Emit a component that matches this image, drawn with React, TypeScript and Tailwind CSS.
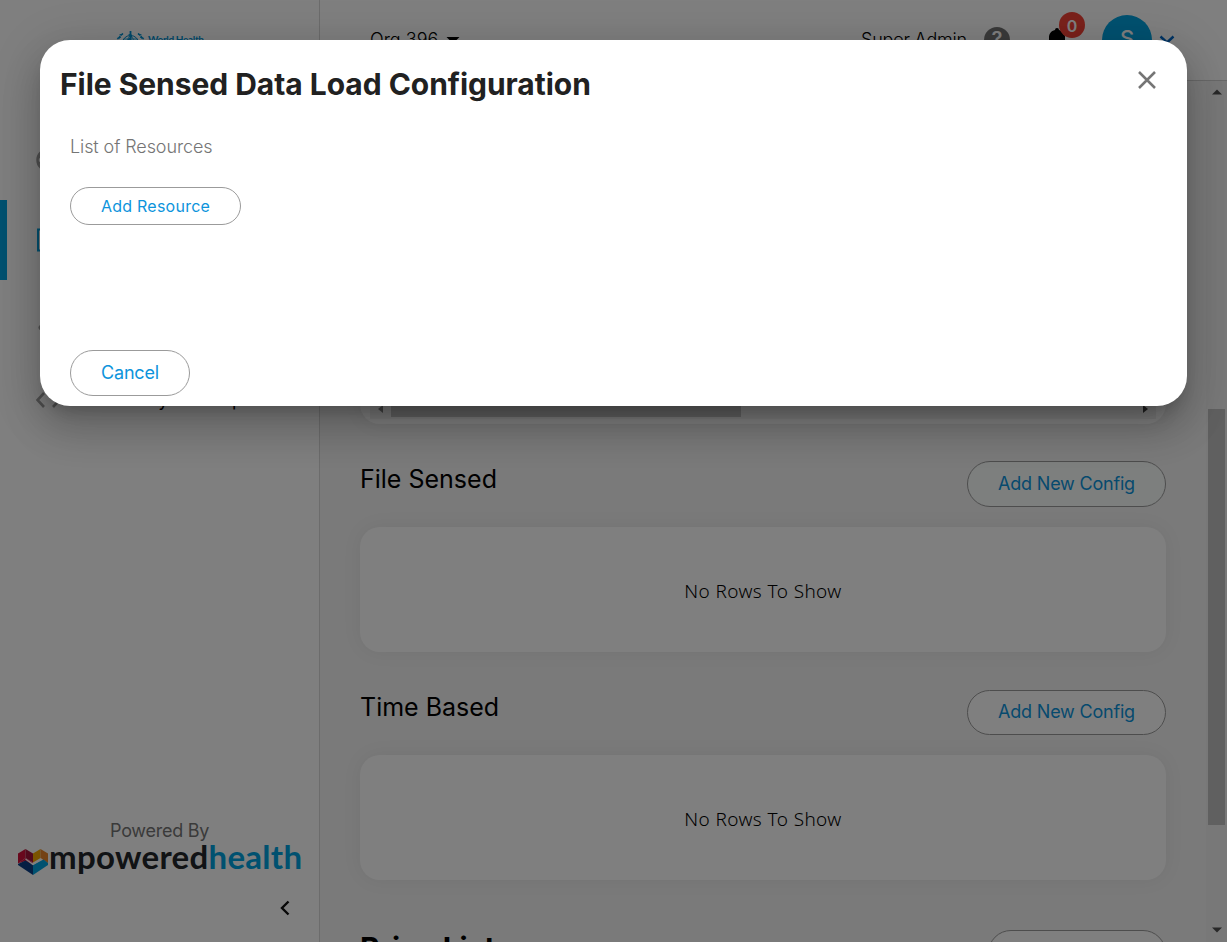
import React from "react";

const INTER = "font-['Inter','Liberation_Sans',sans-serif]";

function PillButton({ children, className = "" }: { children: React.ReactNode; className?: string }) {
  return (
    <button
      className={`flex shrink-0 items-center justify-center rounded-full border border-[#9b9b9b] text-[18px] leading-none text-[#0d94dc] ${className}`}
    >
      {children}
    </button>
  );
}

function WhoLogo() {
  return (
    <div className="flex items-start pl-[116px] pt-[31px] text-[#0093d5]">
      <svg width="29" height="28" viewBox="0 0 29 28" fill="none" stroke="currentColor">
        <path d="M14.5 0v27" strokeWidth="1.8" />
        <path d="M12.5 4c3-1 4 1 2 3s-4 3-1 5" strokeWidth="1.3" />
        <circle cx="14.5" cy="13" r="8.5" strokeWidth="1" />
        <path d="M6 13h17M14.5 4.5c-5 4-5 13 0 17M14.5 4.5c5 4 5 13 0 17M8 8h13" strokeWidth=".8" />
        <path d="M7 2.500C2 6 0 12 3 19M22 2.500c5 3.500 7 9.500 4 16.500" strokeWidth="1.500" strokeDasharray="3 1" />
        <path d="M7 3 3.500 4M5 6 1 7.500M22 3l3.500 1M24 6l4 1.500" strokeWidth="1.200" />
      </svg>
      <div className="pl-[3px] pt-[2px] font-['Lato',sans-serif] text-[10px] font-bold leading-[12px] tracking-[-0.35px]">
        World Health
        <br />
        Organization
      </div>
    </div>
  );
}

function HeartLogo() {
  return (
    <svg width="30" height="26" viewBox="0 0 30 26">
      <path d="M0 4.500 7.500 0v9L0 14.500z" fill="#d0103a" />
      <path d="M7.500 0 15 4.500v9L7.500 9z" fill="#a3143a" />
      <path d="M0 14.500 7.500 9 15 13.500 11 16 7.500 12 0 14.500z" fill="#d50f3c" />
      <path d="M15 4.500 22.500 0v9L15 13.500z" fill="#f5a800" />
      <path d="M22.500 0 30 4.500v9.500L22.500 9z" fill="#e8842a" />
      <path d="M0 15 7.500 11.500 15 16V26L0 16z" fill="#0b3f86" />
      <path d="M15 16 25.500 10.500 30 14v2L15 26z" fill="#00a3e0" />
      <path d="m7.500 10 7.500 5.300 8.500-5.300" fill="none" stroke="#fff" strokeWidth="1.400" />
    </svg>
  );
}

function Sidebar() {
  return (
    <aside className="flex h-full w-[320px] shrink-0 flex-col border-r border-[#d8d8d8] bg-white">
      <div className="h-[120px]">
        <WhoLogo />
      </div>
      <nav className="flex flex-col text-[18px] text-black">
        <div className="flex h-20 items-center gap-5 pl-9 text-[#a0a0a0]">
          <svg width="24" height="24" viewBox="0 0 24 24" fill="none" stroke="currentColor" strokeWidth="2.500">
            <circle cx="12" cy="12" r="10.500" />
            <path d="M2 9h20M2 15h20" />
          </svg>
        </div>
        <div className="flex h-20 items-center border-l-[7px] border-[#00a3e0] pl-[30px] text-[#00a3e0]">
          <svg width="24" height="24" viewBox="0 0 24 24" fill="none" stroke="currentColor" strokeWidth="2">
            <rect x="1" y="1.500" width="22" height="21" />
          </svg>
        </div>
        <div className="flex h-20 items-center pl-[38px] text-[#a0a0a0]">
          <svg width="24" height="24" viewBox="0 0 24 24" fill="currentColor">
            <circle cx="3" cy="19.500" r="2.500" />
          </svg>
        </div>
        <div className="flex h-20 items-center gap-7 pl-9">
          <svg width="26" height="16" viewBox="0 0 26 16" fill="none" stroke="#a0a0a0" strokeWidth="2.600">
            <path d="M8 1 1.500 8 8 15M17 1l6.500 7-6.500 7" />
          </svg>
          <span className="-mt-[2px] whitespace-nowrap">Directory Developer</span>
        </div>
      </nav>
      <div className="mt-auto flex h-[126px] flex-col">
        <div className="pl-[110px] pt-[4px] text-[18px] leading-[22px] tracking-[-0.25px] text-[#757575]">Powered By</div>
        <div className="flex h-9 items-start pl-[18px]">
          <div className="pt-[7px]">
            <HeartLogo />
          </div>
          <div className="-mt-[1px] whitespace-nowrap pl-[1px] font-['Lato',sans-serif] text-[33px] font-bold leading-[30px] tracking-[0.3px] text-[#22262b]">
            mpowered<span className="text-[#00a3e0]">health</span>
          </div>
        </div>
        <div className="pl-[279px] pt-[22px]">
          <svg width="12" height="16" viewBox="0 0 12 16" fill="none" stroke="#111" strokeWidth="2.400">
            <path d="M9.500 1.500 3 8l6.500 6.500" />
          </svg>
        </div>
      </div>
    </aside>
  );
}

function Header() {
  return (
    <header className="flex h-[81px] shrink-0 items-start border-b border-[#d0d0d0] bg-white text-[18px] text-black">
      <div className="flex items-center pl-[50px] pt-[29px] font-light leading-[22px]">
        Org 396
        <svg className="ml-[8px]" width="14" height="8" viewBox="0 0 14 8">
          <path d="M.5 1h13L7 7.500z" fill="#000" />
        </svg>
      </div>
      <div className="ml-auto flex items-start">
        <span className="pt-[29px] font-light leading-[22px] tracking-[-0.2px]">Super Admin</span>
        <div className="ml-[17px] mt-[27px] flex h-[26px] w-[26px] items-center justify-center rounded-full bg-[#757575] pb-[2px] text-[20px] font-semibold leading-none text-white">
          ?
        </div>
        <div className="relative ml-[37px] mt-[28px]">
          <svg width="20" height="24" viewBox="0 0 20 24">
            <path d="M10 0a2 2 0 0 0-2 2C4 3 2 6 2 9v8l-2 3h20l-2-3V9c0-3-2-6-6-7a2 2 0 0 0-2-2z" fill="#000" />
          </svg>
          <div className="absolute -top-[16px] left-[12px] flex h-[26px] w-[26px] items-center justify-center rounded-full bg-[#f44336] pt-[1px] text-[16px] font-semibold text-white">
            0
          </div>
        </div>
        <div className="ml-[35px] mt-[15px] flex h-[50px] w-[50px] items-center justify-center rounded-full bg-[#00a3e0] pb-[3px] text-[22px] font-medium text-white">
          S
        </div>
        <svg className="ml-[7px] mr-[52px] mt-[35px]" width="16" height="10" viewBox="0 0 16 10">
          <path d="m1.500 1.500 6.500 6 6.500-6" fill="none" stroke="#0069c8" strokeWidth="2.400" />
        </svg>
      </div>
    </header>
  );
}

function EmptyGrid() {
  return (
    <div className="mt-5 flex h-[125px] shrink-0 items-center justify-center rounded-[20px] bg-white pt-[4px] font-['Noto_Sans','Open_Sans',sans-serif] text-[19px] font-light tracking-[0.4px] text-black shadow-[0_0_20px_rgba(0,0,0,0.06)]">
      No Rows To Show
    </div>
  );
}

function Content() {
  return (
    <main className="flex min-w-0 flex-1 flex-col overflow-hidden bg-[#f4f4f4] pl-10 pr-10">
      <div className="flex h-[343px] shrink-0 flex-col justify-end rounded-[20px] bg-white px-[10px] pb-[5px] shadow-[0_0_20px_rgba(0,0,0,0.06)]">
        <div className="flex h-[17px] items-center bg-[#f1f1f1]">
          <svg className="-mt-[4px] mx-[7px]" width="7" height="8" viewBox="0 0 7 8">
            <path d="M6 0v8L1 4z" fill="#808080" />
          </svg>
          <div className="-mt-px h-[13px] w-[350px] bg-[#c1c1c1]" />
          <svg className="-mt-[4px] ml-auto mr-[7px]" width="7" height="8" viewBox="0 0 7 8">
            <path d="M1 0v8l5-4z" fill="#404040" />
          </svg>
        </div>
      </div>

      <div className="mt-[37px] flex h-[46px] shrink-0 items-start justify-between">
        <h2 className="pt-[2px] text-[25px] leading-[32px] text-black">File Sensed</h2>
        <PillButton className="h-[46px] w-[199px] bg-[#fafefd] tracking-[-0.2px]">Add New Config</PillButton>
      </div>
      <EmptyGrid />

      <div className="mt-[38px] flex h-[45px] shrink-0 items-start justify-between">
        <h2 className="pt-[1px] text-[25px] leading-[32px] text-black">Time Based</h2>
        <PillButton className="h-[45px] w-[199px] bg-white pb-[1px] tracking-[-0.2px]">Add New Config</PillButton>
      </div>
      <EmptyGrid />

      <div className="mt-[50px] flex h-[46px] shrink-0 items-start justify-between">
        <h2 className="text-[30px] font-bold leading-[36px] text-black">Price List</h2>
        <PillButton className="h-[46px] w-[178px] bg-white">Add Price List</PillButton>
      </div>
    </main>
  );
}

function Scrollbar() {
  return (
    <div className="flex w-[21px] shrink-0 flex-col items-center bg-[#f1f1f1]">
      <svg className="mt-[8px]" width="10" height="6" viewBox="0 0 10 6">
        <path d="M0 5.500h10L5 .5z" fill="#505050" />
      </svg>
      <div className="mt-[314px] h-[416px] w-[17px] bg-[#c1c1c1]" />
      <svg className="mt-auto mb-[9px]" width="10" height="6" viewBox="0 0 10 6">
        <path d="M0 .5h10L5 5.500z" fill="#505050" />
      </svg>
    </div>
  );
}

function ConfigDialog() {
  return (
    <div
      role="dialog"
      className="flex h-[366px] flex-col rounded-[30px] bg-white shadow-[0_11px_15px_-7px_rgba(0,0,0,0.2),0_24px_38px_3px_rgba(0,0,0,0.14),0_9px_46px_8px_rgba(0,0,0,0.12)]"
    >
      <div className="flex items-start justify-between pl-5 pr-[31px] pt-[26px]">
        <h1 className="text-[30px] font-bold leading-[36px] tracking-[-0.04px] text-[#212121]">
          File Sensed Data Load Configuration
        </h1>
        <svg className="mt-[5px]" width="18" height="18" viewBox="0 0 18 18">
          <path d="m1 1 16 16M17 1 1 17" stroke="#757575" strokeWidth="2.500" />
        </svg>
      </div>
      <p className="pl-[30px] pt-[33px] text-[18px] font-light leading-[24px] tracking-[-0.1px] text-[#757575]">
        List of Resources
      </p>
      <div className="pl-[30px] pt-[28px]">
        <PillButton className="h-[38px] w-[171px] bg-white text-[16px]! tracking-[0.25px]">Add Resource</PillButton>
      </div>
      <div className="mt-auto pb-[10px] pl-[30px]">
        <PillButton className="h-[46px] w-[120px] bg-white tracking-[-0.2px]">Cancel</PillButton>
      </div>
    </div>
  );
}

export default function App() {
  return (
    <div className={`relative flex h-screen w-full overflow-hidden bg-white ${INTER}`}>
      <Sidebar />
      <div className="flex min-w-0 flex-1 flex-col">
        <Header />
        <div className="flex min-h-0 flex-1">
          <Content />
          <Scrollbar />
        </div>
      </div>
      <div className="absolute inset-0 bg-black/50 p-10">
        <ConfigDialog />
      </div>
    </div>
  );
}
